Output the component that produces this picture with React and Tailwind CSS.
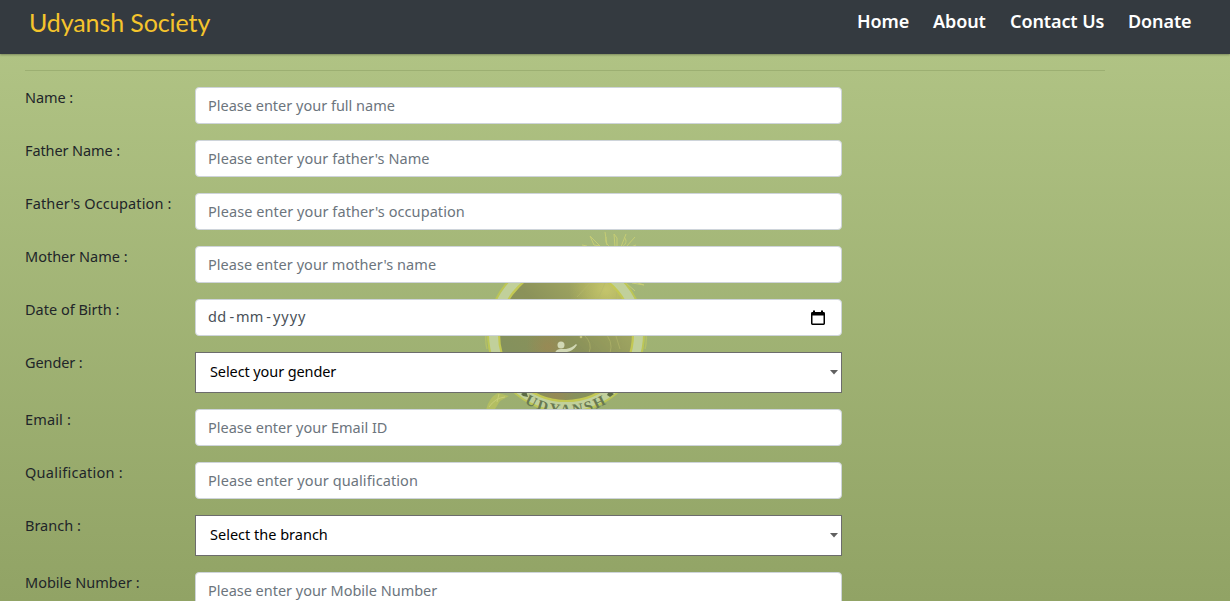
import React from "react";

const navLinks = [
  { label: "Home", cls: "w-[52px]" },
  { label: "About", cls: "w-[53px]" },
  { label: "Contact Us", cls: "w-[94px]" },
  { label: "Donate", cls: "w-[63px]" },
];

const fields = [
  { label: "Name :", text: "Please enter your full name", lcls: "tracking-[-0.1px]" },
  { label: "Father Name :", text: "Please enter your father's Name", lcls: "tracking-[-0.1px]", tcls: "tracking-[0.07px]" },
  { label: "Father's Occupation :", text: "Please enter your father's occupation", lcls: "tracking-[0.13px]", tcls: "tracking-[0.08px]" },
  { label: "Mother Name :", text: "Please enter your mother's name", tcls: "tracking-[0.05px]" },
  { label: "Date of Birth :", text: "dd-mm-yyyy", type: "date" },
  { label: "Gender :", text: "Select your gender", type: "select", lcls: "tracking-[-0.1px]", tcls: "tracking-[-0.1px]" },
  { label: "Email :", text: "Please enter your Email ID", lcls: "tracking-[0.15px]" },
  { label: "Qualification :", text: "Please enter your qualification", lcls: "tracking-[0.26px]", tcls: "tracking-[0.1px]" },
  { label: "Branch :", text: "Select the branch", type: "select" },
  { label: "Mobile Number :", text: "Please enter your Mobile Number", tcls: "tracking-[-0.02px]" },
];

function CalendarIcon() {
  return (
    <svg width="14" height="16" viewBox="0 0 14 16" className="shrink-0">
      <path d="M2 0.500h2v1.500h6V.5h2V2h.6A1.4 1.4 0 0 1 14 3.400v10.200A1.4 1.4 0 0 1 12.600 15H1.400A1.400 1.400 0 0 1 0 13.600V3.400A1.400 1.400 0 0 1 1.400 2H2zM1.500 5.500v8h11v-8z" fill="#000" fillRule="evenodd" />
    </svg>
  );
}

function Watermark() {
  return (
    <svg className="absolute left-[470px] top-[220px]" width="190" height="200" viewBox="470 220 190 200">
      <defs>
        <linearGradient id="disc" x1="0" y1="1" x2="1" y2="0">
          <stop offset="0" stopColor="#7f905f" />
          <stop offset=".5" stopColor="#8b925a" />
          <stop offset="1" stopColor="#b5ba68" />
        </linearGradient>
        <radialGradient id="glow">
          <stop offset="0" stopColor="#a5834f" stopOpacity=".55" />
          <stop offset="1" stopColor="#a5834f" stopOpacity="0" />
        </radialGradient>
        <radialGradient id="sun">
          <stop offset="0" stopColor="#cfce70" stopOpacity=".75" />
          <stop offset="1" stopColor="#c9c760" stopOpacity="0" />
        </radialGradient>
        <path id="ring" d="M485.500 334A80.500 80.500 0 0 0 646.500 334" />
        <clipPath id="inner"><circle cx="566" cy="334" r="66" /></clipPath>
      </defs>
      <g fill="none" stroke="#c6cd74" strokeWidth="1">
        <path d="M590 236l10 10-6-1zM605 232l2 13M615 247l-1-13 3 4v9M626 234l-5 13M635 237l-9 10M582 245l5 1M636 245l-5 2M610 247c-6-5-4-7-4-10M622 247c6-4 4-8 2-10" />
        <path d="M632 283l12 2-6-2M626 283l9 8" />
      </g>
      <circle cx="566" cy="334" r="78" fill="#c1d09b" stroke="#bcc656" strokeWidth="2" />
      <circle cx="566" cy="334" r="67" fill="url(#disc)" stroke="#c3c853" strokeWidth="2.200" />
      <g clipPath="url(#inner)">
        <circle cx="606" cy="290" r="37" fill="url(#sun)" />
        <circle cx="548" cy="347" r="22" fill="url(#glow)" />
        <circle cx="556" cy="394" r="20" fill="url(#glow)" />
        <g stroke="#b5b86b" strokeWidth="1" fill="none" opacity=".6">
          <path d="M584 335q9 8 5 18M603 331q11 10 7 22M615 333l5 16" />
          <path d="M590 283l-13 14M605 283l-7 16M618 285l-2 14" />
        </g>
        <circle cx="561" cy="345" r="3.500" fill="#d1d8b4" />
        <path d="M555 353q1-4 6-4h5q6-1 10-5l1 1q-4 6-10 7l-1 1z" fill="#d1d8b4" />
        <circle cx="581" cy="337" r="1.300" fill="#bfc17b" />
      </g>
      <path d="M487 349q-2-8-1-15M645 349q2-8 1-15" fill="none" stroke="#b3bf67" strokeWidth="1.500" />
      <path d="M486 410q3-13 12-17l11 3-9 5-5 8z" fill="#b3be62" />
      <path d="M489 407q6-9 16-10M499 394l-2 8" stroke="#c8ce78" fill="none" />
      <path d="M521 394l5-3 2 6-5-1zM607 395l2-4 5 3-4 3z" fill="#5c6b43" />
      <text fontFamily="Liberation Serif, serif" fontSize="15" fontWeight="700" fill="#687951" textLength="86">
        <textPath href="#ring" startOffset="82.500" textLength="86">UDYANSH</textPath>
      </text>
    </svg>
  );
}

function Field({ label, text, type, lcls = "", tcls = "" }) {
  let control;
  if (type === "select") {
    control = (
      <div className="flex h-[41px] w-[647px] items-center justify-between border border-[#6c6c6c] bg-white pl-[14px] pr-[3px] text-black">
        <span className={"-mt-px " + tcls}>{text}</span>
        <svg width="8" height="5" viewBox="0 0 8 5"><path d="M0 0h8L4 4.5z" fill="#606060" /></svg>
      </div>
    );
  } else {
    control = (
      <div className={"flex h-[37px] w-[647px] items-center justify-between rounded border border-[#ced4da] bg-white pl-3 pr-4 " + (type === "date" ? "text-[#495057]" : "text-[#6c757d]")}>
        {type === "date" ? (
          <span className="-mt-[2px] flex gap-[2px]">
            <span className="tracking-[0.3px]">dd</span><span className="pl-px">-</span><span>mm</span><span className="pl-px">-</span><span className="tracking-[1px]">yyyy</span>
          </span>
        ) : (
          <span className={tcls}>{text}</span>
        )}
        {type === "date" && <CalendarIcon />}
      </div>
    );
  }
  return (
    <div className="flex items-start">
      <label className={"-mt-px w-[170px] shrink-0 leading-[22px] text-[#212529] " + lcls}>{label}</label>
      {control}
    </div>
  );
}

export default function App() {
  return (
    <div className="relative h-[601px] overflow-hidden bg-gradient-to-b from-[#b3c687] to-[#91a365] font-['Noto_Sans',sans-serif] text-[14.5px]">
      <Watermark />
      <header className="relative flex h-[54px] items-start justify-between bg-[#343a40] pl-[29px] pr-[39px] shadow-[0_1px_2px_rgba(0,0,0,0.3)]">
        <div className="mt-1 whitespace-nowrap font-[Lato,sans-serif] text-[25px] leading-9 tracking-[-0.1px] text-[#f5c42c]">Udyansh Society</div>
        <nav className="mt-[7px] flex gap-6 text-[18px] font-semibold leading-7 tracking-[-0.1px] text-white">
          {navLinks.map((n) => (
            <a key={n.label} className={"whitespace-nowrap " + n.cls}>{n.label}</a>
          ))}
        </nav>
      </header>
      <main className="relative px-[25px] pt-4">
        <div className="h-px w-[1080px] bg-[#9caf72]" />
        <form className="mt-4 flex flex-col gap-4">
          {fields.map((f) => <Field key={f.label} {...f} />)}
        </form>
      </main>
    </div>
  );
}
